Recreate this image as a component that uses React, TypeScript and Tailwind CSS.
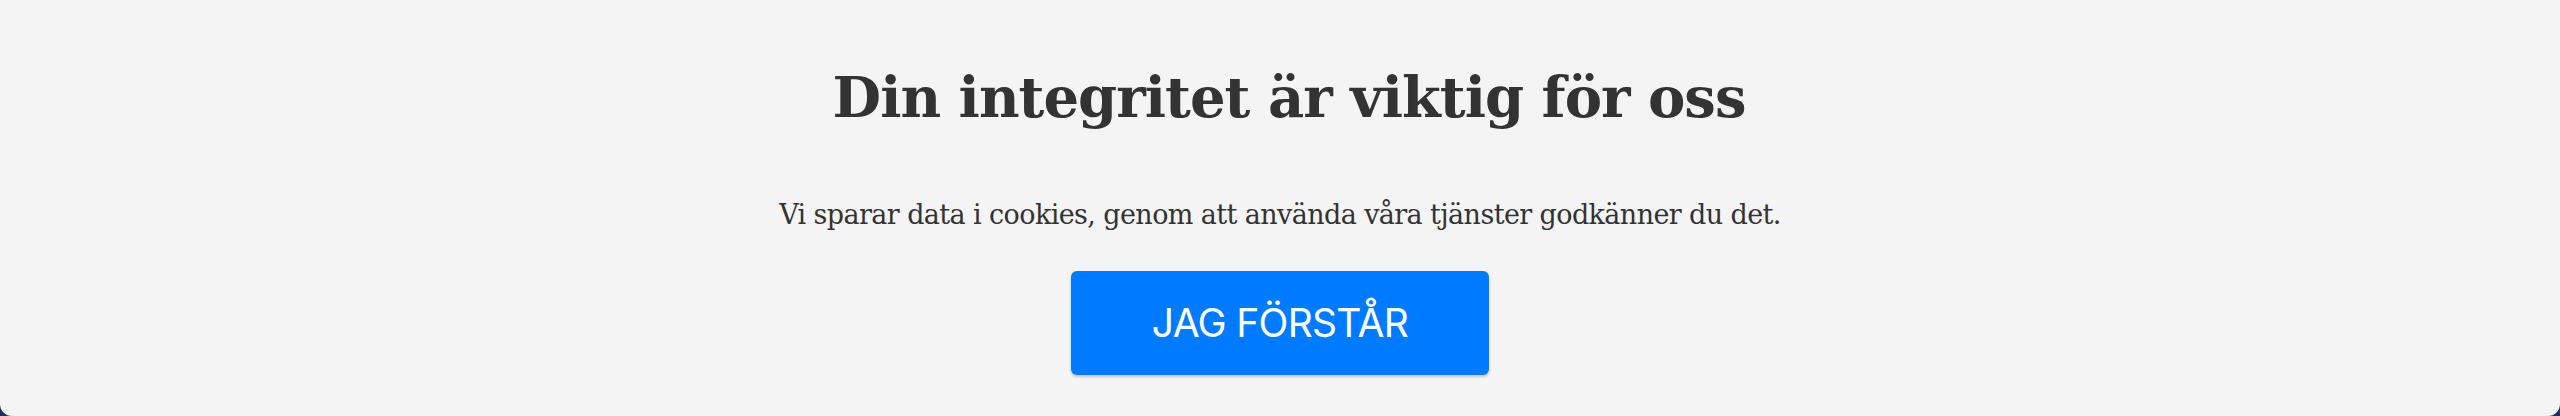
export default function App() {
  return (
    <div className="w-full h-[416px] bg-[#2b2a63] overflow-hidden">
      <div className="h-[416px] bg-[#f4f4f4] rounded-b-[12px] flex flex-col items-center text-[#333333]">
        <h1 className="mt-[63px] pl-[18px] text-[56px] leading-[68px] font-bold font-['DejaVu_Serif',serif] tracking-[-1px]">
          Din integritet är viktig för oss
        </h1>
        <p className="mt-[64px] text-[27px] leading-[40px] font-['DejaVu_Serif',serif] tracking-[-0.6px]">
          Vi sparar data i cookies, genom att använda våra tjänster godkänner du det.
        </p>
        <button className="mt-[36px] w-[418px] h-[104px] bg-[#007bff] rounded-[6px] shadow-[0_2px_3px_rgba(0,0,0,0.2)] text-white text-[39px] font-['Inter',sans-serif] tracking-[-0.7px]">
          JAG FÖRSTÅR
        </button>
      </div>
    </div>
  );
}
